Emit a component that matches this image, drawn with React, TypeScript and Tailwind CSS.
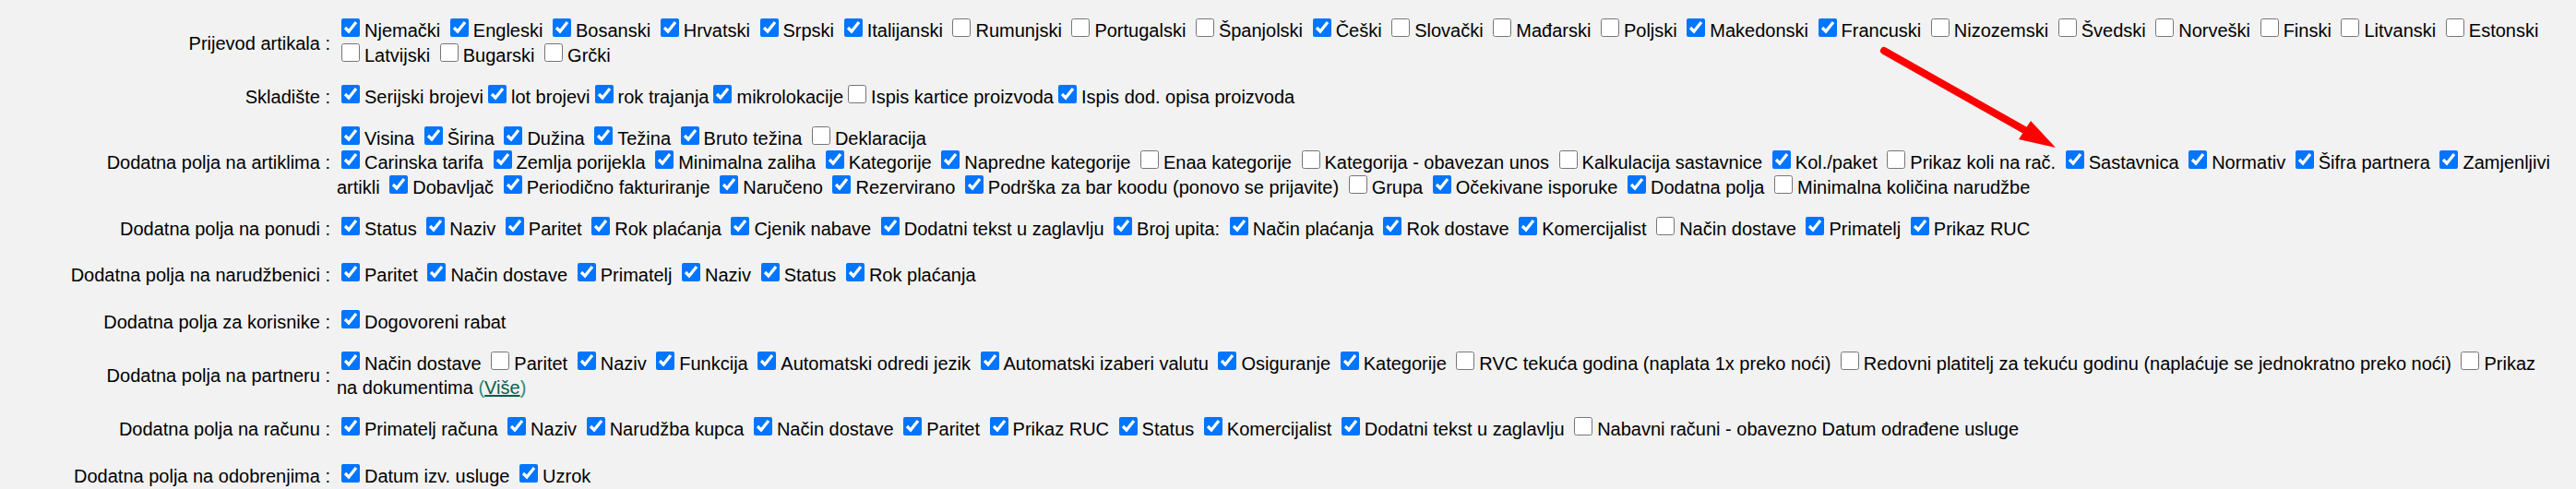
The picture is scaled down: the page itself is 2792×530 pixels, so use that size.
type Opt = [string, boolean];

type Row = {
  label: string;
  lines: Opt[][];
  tight?: boolean;
  more?: boolean;
  space: string;
};

const ROWS: Row[] = [
  {
    label: "Prijevod artikala",
    space: "",
    lines: [
      [
        ["Njemački", true],
        ["Engleski", true],
        ["Bosanski", true],
        ["Hrvatski", true],
        ["Srpski", true],
        ["Italijanski", true],
        ["Rumunjski", false],
        ["Portugalski", false],
        ["Španjolski", false],
        ["Češki", true],
        ["Slovački", false],
        ["Mađarski", false],
        ["Poljski", false],
        ["Makedonski", true],
        ["Francuski", true],
        ["Nizozemski", false],
        ["Švedski", false],
        ["Norveški", false],
        ["Finski", false],
        ["Litvanski", false],
        ["Estonski", false],
        ["Latvijski", false],
        ["Bugarski", false],
        ["Grčki", false],
      ],
    ],
  },
  {
    label: "Skladište",
    space: "",
    tight: true,
    lines: [
      [
        ["Serijski brojevi", true],
        ["lot brojevi", true],
        ["rok trajanja", true],
        ["mikrolokacije", true],
        ["Ispis kartice proizvoda", false],
        ["Ispis dod. opisa proizvoda", true],
      ],
    ],
  },
  {
    label: "Dodatna polja na artiklima",
    space: "",
    lines: [
      [
        ["Visina", true],
        ["Širina", true],
        ["Dužina", true],
        ["Težina", true],
        ["Bruto težina", true],
        ["Deklaracija", false],
      ],
      [
        ["Carinska tarifa", true],
        ["Zemlja porijekla", true],
        ["Minimalna zaliha", true],
        ["Kategorije", true],
        ["Napredne kategorije", true],
        ["Enaa kategorije", false],
        ["Kategorija - obavezan unos", false],
        ["Kalkulacija sastavnice", false],
        ["Kol./paket", true],
        ["Prikaz koli na rač.", false],
        ["Sastavnica", true],
        ["Normativ", true],
        ["Šifra partnera", true],
        ["Zamjenljivi artikli", true],
        ["Dobavljač", true],
        ["Periodično fakturiranje", true],
        ["Naručeno", true],
        ["Rezervirano", true],
        ["Podrška za bar koodu (ponovo se prijavite)", true],
        ["Grupa", false],
        ["Očekivane isporuke", true],
        ["Dodatna polja", true],
        ["Minimalna količina narudžbe", false],
      ],
    ],
  },
  {
    label: "Dodatna polja na ponudi",
    space: "",
    lines: [
      [
        ["Status", true],
        ["Naziv", true],
        ["Paritet", true],
        ["Rok plaćanja", true],
        ["Cjenik nabave", true],
        ["Dodatni tekst u zaglavlju", true],
        ["Broj upita:", true],
        ["Način plaćanja", true],
        ["Rok dostave", true],
        ["Komercijalist", true],
        ["Način dostave", false],
        ["Primatelj", true],
        ["Prikaz RUC", true],
      ],
    ],
  },
  {
    label: "Dodatna polja na narudžbenici",
    space: "mt-[5px]",
    lines: [
      [
        ["Paritet", true],
        ["Način dostave", true],
        ["Primatelj", true],
        ["Naziv", true],
        ["Status", true],
        ["Rok plaćanja", true],
      ],
    ],
  },
  {
    label: "Dodatna polja za korisnike",
    space: "mt-[6px]",
    lines: [[["Dogovoreni rabat", true]]],
  },
  {
    label: "Dodatna polja na partneru",
    space: "",
    more: true,
    lines: [
      [
        ["Način dostave", true],
        ["Paritet", false],
        ["Naziv", true],
        ["Funkcija", true],
        ["Automatski odredi jezik", true],
        ["Automatski izaberi valutu", true],
        ["Osiguranje", true],
        ["Kategorije", true],
        ["RVC tekuća godina (naplata 1x preko noći)", false],
        ["Redovni platitelj za tekuću godinu (naplaćuje se jednokratno preko noći)", false],
        ["Prikaz na dokumentima", false],
      ],
    ],
  },
  {
    label: "Dodatna polja na računu",
    space: "",
    lines: [
      [
        ["Primatelj računa", true],
        ["Naziv", true],
        ["Narudžba kupca", true],
        ["Način dostave", true],
        ["Paritet", true],
        ["Prikaz RUC", true],
        ["Status", true],
        ["Komercijalist", true],
        ["Dodatni tekst u zaglavlju", true],
        ["Nabavni računi - obavezno Datum odrađene usluge", false],
      ],
    ],
  },
  {
    label: "Dodatna polja na odobrenjima",
    space: "mt-[6px]",
    lines: [
      [
        ["Datum izv. usluge", true],
        ["Uzrok", true],
      ],
    ],
  },
];

function Check({ text, checked, tight }: { text: string; checked: boolean; tight?: boolean }) {
  return (
    <>
      <input
        type="checkbox"
        defaultChecked={checked}
        className="ml-[5px] mr-[5px] h-[20px] w-[20px] align-baseline"
      />
      {text}
      {tight ? "" : " "}
    </>
  );
}

export default function App() {
  return (
    <div className="relative h-[530px] overflow-hidden bg-[#f2f2f2] pt-[11px] font-['Liberation_Sans',Arial,sans-serif] text-[20px] leading-[26.5px] text-black">
      {ROWS.map((row) => (
        <div key={row.label} className={`flex items-center py-[9.25px] ${row.space}`}>
          <div className="w-[358px] shrink-0 whitespace-nowrap text-right">{row.label} :</div>
          <div className="w-[2409px] shrink-0 pl-[7px]">
            {row.lines.map((line, i) => (
              <span key={i}>
                {i > 0 && <br />}
                {line.map(([text, checked]) => (
                  <Check key={text} text={text} checked={checked} tight={row.tight} />
                ))}
              </span>
            ))}
            {row.more && (
              <span className="text-[#2b8a78]">
                (<a href="#" className="text-[#0d5c4c] underline">Više</a>)
              </span>
            )}
          </div>
        </div>
      ))}

      {/* red pointer arrow */}
      <svg
        className="pointer-events-none absolute left-[2030px] top-[45px]"
        width="210"
        height="125"
        viewBox="0 0 210 125"
      >
        <line x1="12" y1="10" x2="168" y2="98" stroke="#ff0000" strokeWidth="8" strokeLinecap="round" />
        <polygon points="198,115 158,106 171,86" fill="#ff0000" />
      </svg>
    </div>
  );
}
